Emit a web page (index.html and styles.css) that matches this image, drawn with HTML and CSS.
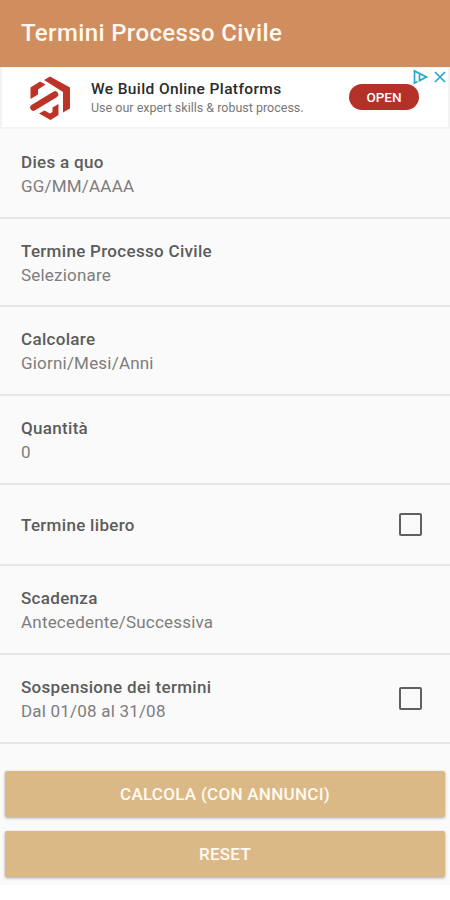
FILE: index.html
```html
<!DOCTYPE html>
<html lang="it">
<head>
<meta charset="utf-8">
<title>Termini Processo Civile</title>
<link rel="stylesheet" href="styles.css">
</head>
<body>
<header class="bar"><h1>Termini Processo Civile</h1></header>
<aside class="ad">
  <svg class="logo" viewBox="0 0 42 46" width="42" height="46">
    <path d="M15 5 21 1.500 41 12.500V33.500L34 37.500V17Z"/>
    <path d="M1.500 24V12.500L11 6.500 16.500 9.500 9 14.500V19.500Z"/>
    <path d="M4.500 32.500 26 19.500" class="stroke"/>
    <path d="M10 38.500 15.500 35.500 21 38.500 23.500 37V32.500L29.500 29V40L21.500 45Z"/>
  </svg>
  <div class="ad-text">
    <div class="ad-title">We Build Online Platforms</div>
    <div class="ad-sub">Use our expert skills &amp; robust process.</div>
  </div>
  <div class="open">OPEN</div>
  <svg class="choices" viewBox="0 0 34 16" width="34" height="16">
    <path d="M4.500 12.500 1.500 14V2L13.500 8 6.500 11.500V5.500"/>
    <path d="M22 3 32 13M32 3 22 13"/>
  </svg>
</aside>
<main>
  <section class="row"><div><h2>Dies a quo</h2><p>GG/MM/AAAA</p></div></section>
  <section class="row short"><div><h2>Termine Processo Civile</h2><p>Selezionare</p></div></section>
  <section class="row"><div><h2>Calcolare</h2><p>Giorni/Mesi/Anni</p></div></section>
  <section class="row"><div><h2>Quantità</h2><p>0</p></div></section>
  <section class="row single"><div><h2>Termine libero</h2></div><span class="box"></span></section>
  <section class="row"><div><h2>Scadenza</h2><p>Antecedente/Successiva</p></div></section>
  <section class="row"><div><h2>Sospensione dei termini</h2><p>Dal 01/08 al 31/08</p></div><span class="box"></span></section>
  <div class="actions">
    <button>CALCOLA (CON ANNUNCI)</button>
    <button>RESET</button>
  </div>
</main>
</body>
</html>
```
FILE: styles.css
```css
* { box-sizing: border-box; margin: 0; padding: 0; }
body { font-family: Roboto, sans-serif; background: #fff; width: 450px; height: 900px; overflow: hidden; }
.bar { height: 67px; background: #d08d5d; padding: 0 0 2px 21px; display: flex; align-items: center; }
h1 { font-size: 24px; font-weight: 500; letter-spacing: .36px; color: #fff8f0; line-height: 28px; }
.ad { position: relative; height: 62px; display: flex; align-items: center; background: #fff; border: 2px solid #f3f3f3; border-top-width: 1px; padding-left: 27px; }
.logo { fill: #bb3427; flex: none; }
.logo .stroke { stroke: #bb3427; stroke-width: 6.500; stroke-linecap: round; }
.ad-text { margin-left: 20px; width: 258px; white-space: nowrap; }
.ad-title { font-size: 15.500px; font-weight: 500; letter-spacing: .38px; line-height: 20px; color: #2b2b2b; }
.ad-sub { font-size: 12.500px; line-height: 18px; color: #777; }
.open { width: 70px; height: 26px; border-radius: 13px; background: #b43127; color: #fff; font-size: 13.500px; font-weight: 500; line-height: 26px; text-align: center; position: relative; top: -1px; }
.choices { position: absolute; right: 1px; top: 1px; fill: none; stroke: #25a9c5; stroke-width: 1.700; }
main { background: #fafafa; height: 756px; padding-top: 1px; }
.row { height: 89px; border-bottom: 2px solid #e6e6e6; padding: 1px 28px 0 21px; display: flex; align-items: center; justify-content: space-between; }
.row.short { height: 88px; }
.row.single { height: 81px; }
h2 { font-size: 17px; font-weight: 500; letter-spacing: .31px; line-height: 24px; color: #5c5c5c; }
.row p { font-size: 17px; letter-spacing: .2px; line-height: 24px; color: #7d7d7d; }
.box { width: 23px; height: 23px; border: 2px solid #606060; border-radius: 2px; margin-top: -2px; }
.actions { padding: 27px 5px 0; display: grid; gap: 14px; }
button { height: 46px; border: 0; border-radius: 2px; background: #dbb987; color: #fffaf2; font: 500 17px Roboto, sans-serif; letter-spacing: .28px; box-shadow: 0 1px 3px rgba(0,0,0,.35); }
```
